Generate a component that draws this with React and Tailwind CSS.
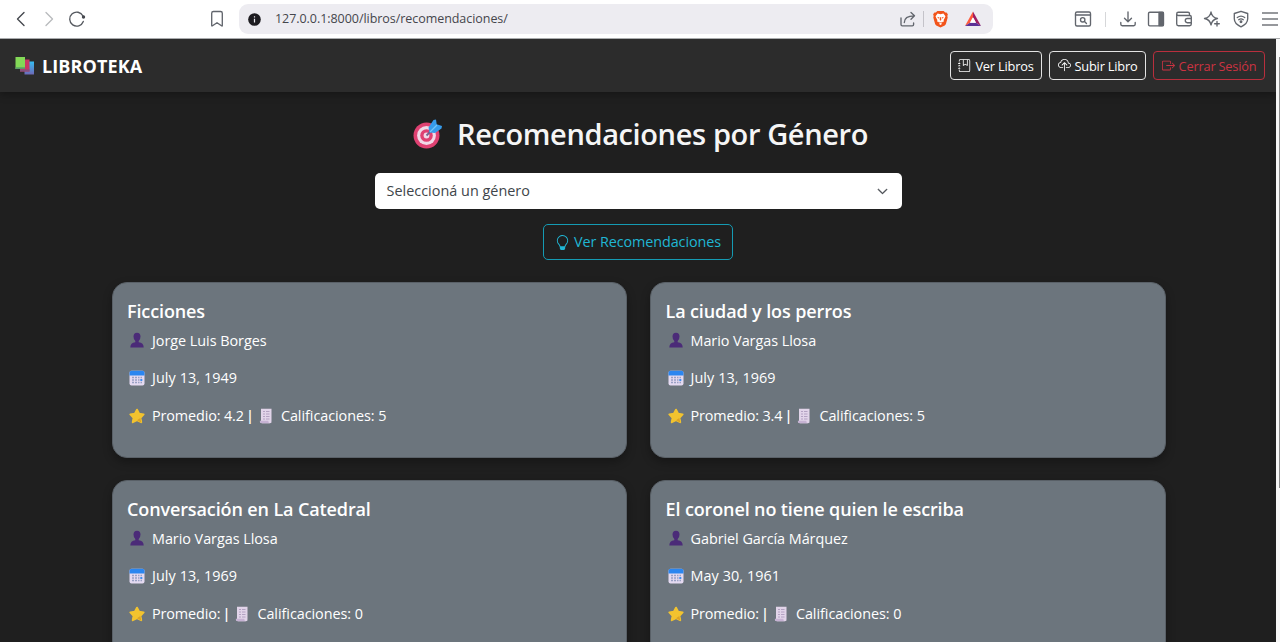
import { BsJournalBookmark, BsCloudUpload, BsBoxArrowRight, BsLightbulb, BsChevronDown } from "react-icons/bs";

function Icon({ children, className = "" }) {
  return (
    <svg viewBox="0 0 18 18" fill="none" stroke="#62666d" strokeWidth="1.35" strokeLinecap="round" strokeLinejoin="round" className={"shrink-0 " + className}>
      {children}
    </svg>
  );
}

function Lion() {
  return (
    <svg viewBox="0 0 18 20" className="ml-[8px] h-[18px] w-[17px] shrink-0">
      <path d="M5.500 1h7l1.700 1.800 1.500-.1 1.500 2-.6 2 .4 1.500-2 7.300q-.4 1-1.300 1.600L9 19.500l-4.700-2.400Q3.400 16.500 3 15.500L1 8.200l.4-1.500-.6-2 1.500-2 1.500.1Z" fill="#f2541b" />
      <path d="m5.800 4 3.200.6 3.200-.6 2.300 3-.8 2-1.200 2.100.2 1.700-3 1.500.8 1.200L9 16.800l-1.500-1.300.8-1.200-3-1.500.2-1.700L4.300 9l-.8-2Z" fill="#fff" />
      <path d="m5 7.500 2.700.8-.6 1.300ZM13 7.500l-2.700.8.6 1.300ZM8.300 8h1.400l.2 3-.9 1-.9-1ZM6.500 12.800l2.500 1 2.500-1L9 14.600Z" fill="#f2541b" />
    </svg>
  );
}

function BrowserBar() {
  return (
    <div className="flex h-[39px] shrink-0 items-center border-b border-[#a9abad] bg-white">
      <Icon className="ml-[12px] size-[18px]"><path d="M12 2.500 5.500 9l6.500 6.500" stroke="#45484e" /></Icon>
      <Icon className="ml-[10px] size-[18px]"><path d="M6 2.500 12.500 9 6 15.500" stroke="#b9bbbe" /></Icon>
      <Icon className="ml-[10px] size-[18px]">
        <path d="M15.300 11.500A7 7 0 1 1 15 6" stroke="#55595f" />
        <circle cx="15.500" cy="7" r="1.700" fill="#45484e" stroke="none" />
      </Icon>
      <Icon className="ml-[122px] size-[18px]"><path d="M3.700 3.200Q3.700 1.500 5.400 1.500h7.200q1.700 0 1.700 1.700v12.300q0 .9-.8.300L9 12.700l-4.500 3.100q-.8.500-.8-.3Z" /></Icon>
      <div className="ml-[13px] flex h-[30px] w-[754px] shrink-0 items-center rounded-[9px] bg-[#edecf1]">
        <svg viewBox="0 0 14 14" className="ml-[9px] size-[13px] shrink-0">
          <circle cx="7" cy="7" r="6.800" fill="#1d1c21" />
          <path d="M7 6.200v4M7 3.500v1.300" stroke="#edecf1" strokeWidth="1.300" />
        </svg>
        <span className="ml-[14px] w-[624px] whitespace-nowrap pt-px text-[12.500px] tracking-[-0.050px] text-[#45464c]">127.0.0.1:8000/libros/recomendaciones/</span>
        <Icon className="size-[18px]"><path d="M2 8v6.500q0 1.300 1.300 1.300h10q1.300 0 1.300-1.300V13M5.300 12.500C5.300 8 8.500 5.800 15.300 5.800M12 2.500l3.500 3.300L12 9.200" /></Icon>
        <div className="ml-[6px] h-[16px] w-px bg-[#c4c3c9]" />
        <Lion />
        <svg viewBox="0 0 18 16" className="ml-[15px] h-[16px] w-[18px] shrink-0">
          <path d="M9 .5 1 15l5-3.200L9 6.300Z" fill="#ff5a3c" />
          <path d="M9 .5 17 15l-5-3.200L9 6.300Z" fill="#9e1f63" />
          <path d="M1 15h16l-5-3.200H6Z" fill="#5c3196" />
          <path d="M9 6.300 12 11.800H6Z" fill="#fff" />
        </svg>
      </div>
      <Icon className="ml-[81px] size-[18px]">
        <rect x="1.500" y="2" width="15" height="14" rx="1.500" /><path d="M1.500 5h15" />
        <circle cx="8.700" cy="9.800" r="2.200" /><path d="m10.500 11.500 2 2" />
      </Icon>
      <div className="ml-[13px] h-[15px] w-px bg-[#d6d7d9]" />
      <Icon className="ml-[13px] size-[18px]"><path d="M9 2v9.500M5.500 8.200 9 11.700l3.500-3.500M1.800 12.500v1.800q0 1.400 1.400 1.400h11.600q1.400 0 1.400-1.400v-1.800" /></Icon>
      <Icon className="ml-[10px] size-[18px]"><rect x="1.500" y="2.200" width="15" height="13.600" rx="1.300" /><path d="M12 2.500h4.300v13H12Z" fill="#62666d" /></Icon>
      <Icon className="ml-[10px] size-[18px]">
        <path d="M14.500 5.500v-1.800q0-1.500-1.500-1.500H3.300Q1.700 2.200 1.700 4v10q0 1.700 1.700 1.700h11.200q1.700 0 1.700-1.700V7q0-1.500-1.600-1.500H3.300Q1.700 5.500 1.700 4M16.300 8.500h-4q-2 0-2 2.100t2 2.100h4" />
      </Icon>
      <Icon className="ml-[10px] size-[18px]">
        <path d="M8 2q1 5.500 6.500 6.500Q9 9.500 8 15 7 9.500 1.500 8.500 7 7.500 8 2Z" /><path d="M14 11.500v4.500M11.700 13.700h4.600" />
      </Icon>
      <Icon className="ml-[11px] size-[18px]">
        <path d="M9 1.300 15.700 3.500v5.300q0 5-6.700 8-6.700-3-6.700-8V3.500Z" /><path d="M5.300 7.500q3.700-2.800 7.400 0M6.700 9.700q2.300-1.700 4.600 0" /><circle cx="9" cy="11.800" r=".8" fill="#62666d" />
      </Icon>
      <svg viewBox="0 0 16 14" className="ml-[12px] h-[14px] w-[16px] shrink-0"><path d="M0 1h16M0 7h16M0 13h16" stroke="#74777c" strokeWidth="1.300" /></svg>
    </div>
  );
}

function Books() {
  return (
    <svg viewBox="0 0 20 19" className="h-[19px] w-[20px] shrink-0">
      <defs>
        <linearGradient id="cover" x1="0" y1="0" x2="0" y2="1"><stop stopColor="#35bdf2" /><stop offset="1" stopColor="#6d68b8" /></linearGradient>
      </defs>
      <path d="M9.500 5.500H19v13H9.500Z" fill="url(#cover)" />
      <path d="M5 3.500h9.500v12H5Z" fill="#c93864" /><path d="M5 13.500h9.500v2H5Z" fill="#81517f" />
      <path d="M.5 1H10V13H.5Z" fill="#83d957" /><path d="M.5 11.300H10v1.700H.5Z" fill="#5a9c69" />
    </svg>
  );
}

function Target() {
  return (
    <svg viewBox="0 0 30 30" className="h-[30px] w-[30px] shrink-0">
      <circle cx="13.500" cy="16.500" r="13" fill="#df4172" />
      <circle cx="13.500" cy="16.500" r="9.400" fill="#f1d9e8" />
      <circle cx="13.500" cy="16.500" r="6.300" fill="#df4172" />
      <circle cx="13.500" cy="16.500" r="2.900" fill="#f1d9e8" />
      <path d="m13.500 16.500 9-9" stroke="#73638f" strokeWidth="1.800" />
      <path d="m16.500 13.500-1-5L20.500 1l2.500-.5.700 4.800 5.300 1.700-.5 2.500-6.500 4.500Z" fill="#369bea" />
      <path d="m17 13 7-7" stroke="#74c5f7" strokeWidth="1.200" />
    </svg>
  );
}

function Person() {
  return (
    <svg viewBox="0 0 16 16" className="size-[16px] shrink-0">
      <path d="M1.300 15.500q0-4.600 5-5.200V9Q4.500 7.500 4.500 4.500 4.500.700 8 .700t3.500 3.800Q11.500 7.500 9.700 9v1.300q5 .6 5 5.200Z" fill="#4b2b78" />
    </svg>
  );
}

function Calendar() {
  return (
    <svg viewBox="0 0 16 16" className="size-[16px] shrink-0">
      <rect x=".5" y=".7" width="15" height="14.800" rx="2" fill="#e4daf1" />
      <path d="M.5 5.500V2.700q0-2 2-2h11q2 0 2 2v2.800Z" fill="#2b86f0" />
      <path d="M3 7.500h2m1 0h2m1 0h1.500m1 0h1.500M3 10h2m1 0h2m1 0h1.500M3 12.500h2m1 0h2m1 0h1.500m1 0h1.500" stroke="#98a0c4" strokeWidth="1.300" />
      <path d="M11.300 10h2" stroke="#2b86f0" strokeWidth="1.800" />
    </svg>
  );
}

function Star() {
  return (
    <svg viewBox="0 0 16 16" className="size-[16px] shrink-0">
      <path d="m8 1.700 2.100 4 4.500.7-3.200 3.300.8 4.500L8 12.100l-4.200 2.100.8-4.500L1.400 6.400l4.500-.7Z" fill="#f2c32f" stroke="#f2c32f" strokeWidth="2" strokeLinejoin="round" />
      <path d="M11.300 10 12.300 14.400 8 12.200Z" fill="#dda323" />
    </svg>
  );
}

function Receipt() {
  return (
    <svg viewBox="0 0 14 16" className="h-[16px] w-[14px] shrink-0">
      <path d="M2 .7h10.500v12.300q.5 2.300-1.500 2.300H3Q.8 15.300.8 13H2Z" fill="#e1d4e9" />
      <path d="M.8 12.700h8.500q0 2.500 1.700 2.600H3Q.8 15.300.8 12.700Z" fill="#c6b2d3" />
      <path d="M4 3.500h2m1 0h3.500M4 6h2m1 0h3.500M4 8.500h2m1 0h3.500M4 11h2m1 0h3.500" stroke="#a796b8" strokeWidth=".8" />
    </svg>
  );
}

const books = [
  { title: "Ficciones", author: "Jorge Luis Borges", date: "July 13, 1949", average: "Promedio: 4.2", count: "Calificaciones: 5" },
  { title: "La ciudad y los perros", author: "Mario Vargas Llosa", date: "July 13, 1969", average: "Promedio: 3.4", count: "Calificaciones: 5" },
  { title: "Conversación en La Catedral", author: "Mario Vargas Llosa", date: "July 13, 1969", average: "Promedio:", count: "Calificaciones: 0" },
  { title: "El coronel no tiene quien le escriba", author: "Gabriel García Márquez", date: "May 30, 1961", average: "Promedio:", count: "Calificaciones: 0" },
];

function BookCard({ book }) {
  return (
    <article className="h-[176px] whitespace-nowrap rounded-[15px] border border-[#596067] bg-[#6c757d] pl-[14.500px] pt-[15px] text-[14.400px] text-white shadow-[0_4px_10px_rgba(0,0,0,0.3)]">
      <h2 className="h-[31px] text-[18px] font-semibold leading-[26px] tracking-[-0.120px]">{book.title}</h2>
      <div className="flex flex-col gap-[15px] pl-[2px]">
        <div className="flex h-[22.700px] items-center gap-[7px]"><Person /><span className="tracking-[-0.040px]">{book.author}</span></div>
        <div className="flex h-[22.700px] items-center gap-[7px]"><Calendar /><span className="tracking-[0.080px]">{book.date}</span></div>
        <div className="flex h-[22.700px] items-center">
          <Star />
          <span className="ml-[7px] tracking-[-0.120px]">{book.average}</span>
          <span className="ml-[2px] w-[8px] text-center font-semibold">|</span>
          <span className="ml-[5px] flex"><Receipt /></span>
          <span className="ml-[8px] tracking-[-0.050px]">{book.count}</span>
        </div>
      </div>
    </article>
  );
}

function Navbar() {
  return (
    <nav className="flex h-[53px] shrink-0 items-center bg-[#2c2c2c] pl-[15px] pr-[11px] text-white shadow-[0_2px_8px_rgba(0,0,0,0.35)]">
      <Books />
      <span className="ml-[7px] pt-px text-[18px] font-bold tracking-[0.100px]">LIBROTEKA</span>
      <div className="ml-auto flex gap-[7px] whitespace-nowrap text-[12.800px] tracking-[-0.200px]">
        <button className="flex h-[29px] w-[92px] items-center justify-center gap-[4px] rounded-[4px] border border-[#e3e3e3]"><BsJournalBookmark className="size-[13px]" /><span className="pt-[2px]">Ver Libros</span></button>
        <button className="flex h-[29px] w-[97px] items-center justify-center gap-[4px] rounded-[4px] border border-[#e3e3e3]"><BsCloudUpload className="size-[13px]" /><span className="pt-[2px]">Subir Libro</span></button>
        <button className="flex h-[29px] w-[112px] items-center justify-center gap-[4px] rounded-[4px] border border-[#b92f3d] text-[#cb3342]"><BsBoxArrowRight className="size-[13px]" /><span className="pt-[2px]">Cerrar Sesión</span></button>
      </div>
    </nav>
  );
}

export default function App() {
  return (
    <div className="flex h-[642px] w-[1280px] flex-col overflow-hidden bg-white font-['Open_Sans',sans-serif]">
      <BrowserBar />
      <div className="flex min-h-0 flex-1">
        <main className="flex w-[1276px] shrink-0 flex-col overflow-hidden bg-[#1f1f1f]">
          <Navbar />
          <section className="flex shrink-0 flex-col items-center px-[111px] pt-[19px]">
            <h1 className="flex h-[45px] items-center gap-[14px] whitespace-nowrap pl-[5px] text-[29px] font-semibold tracking-[-0.380px] text-[#f5f5f5]"><Target /><span>Recomendaciones por Género</span></h1>
            <div className="mt-[17px] flex h-[36px] w-[527px] items-center justify-between rounded-[5px] bg-white pl-[12px] pr-[14px] text-[14.400px] tracking-[0.020px] text-[#40454a]">
              <span>Seleccioná un género</span><BsChevronDown className="size-[11px] stroke-1" />
            </div>
            <button className="mt-[15px] flex h-[36px] w-[190px] items-center justify-center gap-[4px] whitespace-nowrap rounded-[5px] border border-[#159bb3] text-[14.400px] tracking-[-0.100px] text-[#20b6d4]"><BsLightbulb className="size-[15px]" />Ver Recomendaciones</button>
          </section>
          <section className="grid shrink-0 grid-cols-[515.500px_515.500px] gap-x-[23px] gap-y-[22px] pl-[111.500px] pt-[22px]">
            {books.map((book) => <BookCard key={book.title} book={book} />)}
          </section>
        </main>
        <div className="flex flex-1 flex-col bg-[#f7f7f7] pl-[3px] pt-[18px]"><div className="h-[431px] w-px bg-[#8b8b8b]" /></div>
      </div>
    </div>
  );
}
